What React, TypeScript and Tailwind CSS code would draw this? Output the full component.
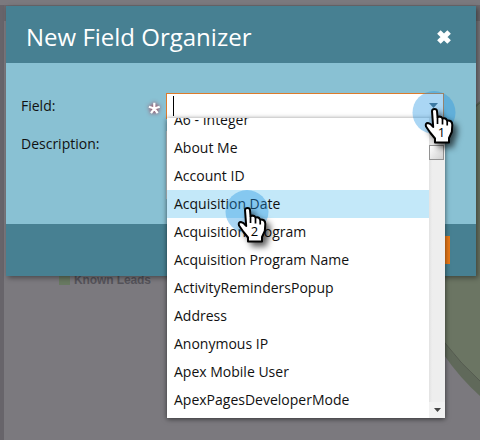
const fields = [
  'A6 - Integer',
  'About Me',
  'Account ID',
  'Acquisition Date',
  'Acquisition Program',
  'Acquisition Program Name',
  'ActivityRemindersPopup',
  'Address',
  'Anonymous IP',
  'Apex Mobile User',
  'ApexPagesDeveloperMode',
];

function Backdrop() {
  return (
    <svg className="absolute inset-0" width="480" height="440" viewBox="0 0 480 440">
      <rect width="480" height="440" fill="#7b797e" />
      <rect y="5" width="480" height="16" fill="#6b686d" />
      <rect y="5" width="4" height="435" fill="#67646a" />
      <path d="M480 101 C420 150 400 290 444 355 Q460 378 480 396Z" fill="#60695a" />
      <path d="M480 103 C420 150 400 290 445 343 Q461 364 480 381Z" fill="#6b7563" />
      <path d="M480 103 C420 150 400 290 445 343 Q461 364 480 381" fill="none" stroke="#555b50" />
      <rect x="59" y="274" width="11" height="11" fill="#687961" />
    </svg>
  );
}

function Pointer({ label }: { label: string }) {
  return (
    <svg width="64" height="64" viewBox="0 0 64 64" className="overflow-visible">
      <circle cx="22" cy="21.5" r="21.5" fill="#1f93e2" fillOpacity="0.38" />
      <g className="[filter:drop-shadow(4px_4px_3px_rgba(0,0,0,0.65))]">
        <path
          d="M20 20 Q20.200 18 22.500 18 Q24.800 18 25 20 L25.500 26 Q29.500 24.800 30.500 27.500 Q34 26.500 35 29.500 Q40.300 29 40.300 34 L39.800 41 L37 47 V51.500 H23 V47.500 L18.500 42 L14 35.500 Q13 32 16 32 Q18.500 32.300 21.200 36Z"
          fill="#fff"
          stroke="#000"
          strokeWidth="2"
          strokeLinejoin="round"
        />
        <path d="M25.500 26V33M30.500 27.500V33.500M35.200 29.500V34.500" stroke="#000" strokeWidth="1.700" />
      </g>
      <text x="29.500" y="45.500" textAnchor="middle" fontFamily="Open Sans, sans-serif" fontSize="13" fontWeight="500" fill="#000">
        {label}
      </text>
    </svg>
  );
}

function FieldList() {
  return (
    <div className="absolute left-[167px] top-[118px] flex h-[300px] w-[278px] overflow-hidden bg-white shadow-[0_1px_5px_rgba(0,0,0,0.6)]">
      <ul className="-mt-3 w-[262px] shrink-0 text-[14px] leading-7 text-[#111]">
        {fields.map((name) => (
          <li
            key={name}
            className={`h-7 whitespace-nowrap pl-[7px] ${name === 'Acquisition Date' ? 'bg-[#c3e8f9]' : ''}`}
          >
            {name}
          </li>
        ))}
      </ul>
      <div className="flex w-4 flex-col justify-between bg-gradient-to-r from-[#e2e2e2] via-[#eeeeee] via-20% to-[#eeeeee] pt-[27px]">
        <div className="h-[15px] w-[15px] border border-[#929292] bg-gradient-to-br from-white to-[#d0d0d0]" />
        <div className="flex h-4 items-center justify-center bg-[#f2f2f2]">
          <svg width="7" height="4" viewBox="0 0 7 4">
            <path d="M0 0H7L3.500 4Z" fill="#444" />
          </svg>
        </div>
      </div>
    </div>
  );
}

export default function App() {
  return (
    <div className="relative h-[440px] w-[480px] overflow-hidden font-['Open_Sans',sans-serif]">
      <Backdrop />
      <span className="absolute left-[74px] top-[273px] font-['Liberation_Sans',sans-serif] text-[12px] font-bold leading-[14px] tracking-[-0.1px] text-[#55535a]">
        Known Leads
      </span>
      <section className="relative ml-[6px] flex h-[276px] w-[470px] flex-col pt-[6px]">
        <div className="flex h-[270px] flex-col shadow-[2px_2px_5px_rgba(0,0,0,0.4)]">
          <header className="flex h-[57px] shrink-0 items-center justify-between bg-[#478092] pl-5 pr-[24px]">
            <h1 className="pt-[5px] text-[24px] leading-8 text-white">New Field Organizer</h1>
            <svg width="16" height="16" viewBox="0 0 16 16" className="mt-[4px]">
              <path d="M2.900 2.900L13.100 13.100M13.100 2.900L2.900 13.100" stroke="#fff" strokeWidth="5" />
            </svg>
          </header>
          <div className="flex flex-1 flex-col bg-[#89c1d3] pl-[15px] pt-[30px] text-[14px] text-[#111]">
            <div className="flex h-[38px]">
              <label className="w-[126px] pt-[3px] leading-5">Field:</label>
              <svg width="16" height="24" viewBox="0 0 16 24" className="shrink-0 overflow-visible [filter:drop-shadow(0_0_2px_#a81c30)]">
                <path
                  d="M7.300 15.500V9.800M7.300 15.500L1.900 13.800M7.300 15.500L12.700 13.800M7.300 15.500L4 20.200M7.300 15.500L10.600 20.200"
                  fill="none"
                  stroke="#fff"
                  strokeWidth="2.2"
                />
              </svg>
              <div className="ml-[3px] h-[26px] w-[278px] border border-[#dd7b2b] bg-white pl-[6px] pt-[2px]">
                <div className="h-5 w-px bg-black" />
              </div>
            </div>
            <div className="flex">
              <label className="w-[145px] pt-[3px] leading-5">Description:</label>
              <div className="h-[68px] w-[278px] border border-[#c9cfd2] bg-white" />
            </div>
          </div>
          <footer className="flex h-[52px] shrink-0 justify-end bg-[#478092] pr-[26px] pt-3">
            <div className="h-7 w-[70px] bg-[#e87919]" />
          </footer>
        </div>
      </section>
      <FieldList />
      <svg className="absolute left-[429px] top-[103px]" width="9" height="5" viewBox="0 0 9 5">
        <path d="M0 0H9L4.500 5Z" fill="#506a7b" />
      </svg>
      <div className="absolute left-[412px] top-[91px]">
        <Pointer label="1" />
      </div>
      <div className="absolute left-[225px] top-[190px]">
        <Pointer label="2" />
      </div>
    </div>
  );
}
